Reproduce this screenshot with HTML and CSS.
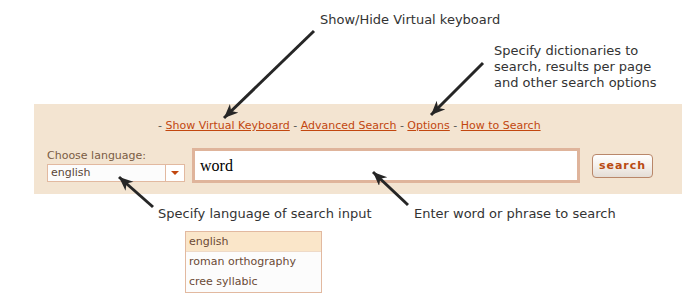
FILE: index.html
```html
<!DOCTYPE html>
<html>
<head>
    <title>Dictionary Search Help</title>
    <meta charset="UTF-8">
    <link rel="stylesheet" href="styles.css">
</head>
<body>
    <!-- Callout notes -->
    <div class="note note-keyboard">Show/Hide Virtual keyboard</div>
    <div class="note note-options">Specify dictionaries to<br>search, results per page<br>and other search options</div>
    <div class="note note-language">Specify language of search input</div>
    <div class="note note-word">Enter word or phrase to search</div>

    <!-- Search panel -->
    <div class="search-panel">
        <div class="search-links">
            - <a href="#">Show Virtual Keyboard</a>
            - <a href="#">Advanced Search</a>
            - <a href="#">Options</a>
            - <a href="#">How to Search</a>
        </div>
        <div class="search-row">
            <div class="lang-picker">
                <label class="lang-label">Choose language:</label>
                <div class="lang-select">
                    <span class="lang-value">english</span>
                    <span class="lang-toggle"><span class="caret"></span></span>
                </div>
            </div>
            <div class="word-box">word</div>
            <button class="search-button">search</button>
        </div>
    </div>

    <!-- Language dropdown (open) -->
    <ul class="lang-menu">
        <li class="selected">english</li>
        <li>roman orthography</li>
        <li>cree syllabic</li>
    </ul>

    <!-- Arrows -->
    <svg class="arrows" width="700" height="300" viewBox="0 0 700 300">
        <defs>
            <marker id="head" markerUnits="userSpaceOnUse" markerWidth="16" markerHeight="14" refX="14" refY="6" orient="auto">
                <path d="M0,0 L14,6 L0,12 L4,6 z" fill="#262626"/>
            </marker>
        </defs>
        <line x1="314" y1="31" x2="224" y2="118" marker-end="url(#head)"/>
        <line x1="483" y1="63" x2="431" y2="115" marker-end="url(#head)"/>
        <line x1="153" y1="207" x2="119" y2="177" marker-end="url(#head)"/>
        <line x1="408" y1="205" x2="373" y2="172" marker-end="url(#head)"/>
    </svg>
</body>
</html>
```

FILE: styles.css
```css
body {
    margin: 0;
    width: 700px;
    height: 300px;
    position: relative;
    background-color: #fff;
    font-family: "DejaVu Sans", Verdana, sans-serif;
    overflow: hidden;
}

/* --- Callout notes --- */
.note {
    position: absolute;
    font-size: 13px;
    line-height: 16px;
    color: #333;
    white-space: nowrap;
}
.note-keyboard { left: 320px; top: 12px; }
.note-options { left: 494px; top: 43px; }
.note-language { left: 158px; top: 206px; }
.note-word { left: 414px; top: 206px; }

.arrows {
    position: absolute;
    left: 0;
    top: 0;
    pointer-events: none;
}
.arrows line {
    stroke: #262626;
    stroke-width: 3;
}

/* --- Search panel --- */
.search-panel {
    margin: 104px 18px 0 34px;
    height: 90px;
    box-sizing: border-box;
    padding: 15px 0 0 13px;
    background-color: #f3e4d1;
}
.search-links {
    font-size: 11px;
    line-height: 14px;
    color: #555;
    padding-left: 111px;
    margin-bottom: 15px;
    white-space: nowrap;
}
.search-links a {
    color: #c2470f;
    text-decoration: underline;
}
.search-row {
    display: flex;
    align-items: center;
    height: 35px;
}

/* language picker */
.lang-picker {
    display: flex;
    flex-direction: column;
    width: 138px;
    margin-right: 7px;
}
.lang-label {
    font-size: 11px;
    line-height: 14px;
    color: #7a5c44;
    margin-bottom: 1px;
}
.lang-select {
    display: flex;
    height: 18px;
    border: 1px solid #e2b9a0;
    background-color: #fcfcfc;
    box-sizing: border-box;
}
.lang-value {
    flex-grow: 1;
    font-size: 11px;
    line-height: 16px;
    color: #5a4636;
    padding-left: 3px;
}
.lang-toggle {
    width: 18px;
    border-left: 1px solid #e2b9a0;
    display: flex;
    align-items: center;
    justify-content: center;
    background-color: #fff;
}
.caret {
    width: 0;
    height: 0;
    border-left: 4px solid transparent;
    border-right: 4px solid transparent;
    border-top: 4px solid #c2470f;
}

/* search field */
.word-box {
    width: 388px;
    height: 35px;
    box-sizing: border-box;
    border: 3px solid #dfb49b;
    background-color: #fff;
    font-family: "Liberation Serif", serif;
    font-size: 16px;
    line-height: 29px;
    padding-left: 5px;
    color: #000;
}
.search-button {
    margin-left: 12px;
    width: 61px;
    height: 24px;
    padding: 0;
    border: 1px solid #b9876a;
    border-radius: 4px;
    background: linear-gradient(#ffffff, #f4f0ec 50%, #e4ddd6);
    font-family: "DejaVu Sans", Verdana, sans-serif;
    font-size: 11px;
    font-weight: bold;
    letter-spacing: 1px;
    color: #b94a13;
    cursor: pointer;
}

/* --- Dropdown menu --- */
.lang-menu {
    position: absolute;
    left: 185px;
    top: 231px;
    width: 137px;
    margin: 0;
    padding: 0;
    list-style: none;
    border: 1px solid #e2b9a0;
    box-sizing: border-box;
    background-color: #fcfcfc;
}
.lang-menu li {
    height: 20px;
    line-height: 20px;
    padding-left: 3px;
    font-size: 11px;
    color: #6b4a35;
}
.lang-menu li.selected {
    background-color: #fae6c9;
    border-bottom: 1px solid #eedac8;
    height: 19px;
    line-height: 19px;
}
```
